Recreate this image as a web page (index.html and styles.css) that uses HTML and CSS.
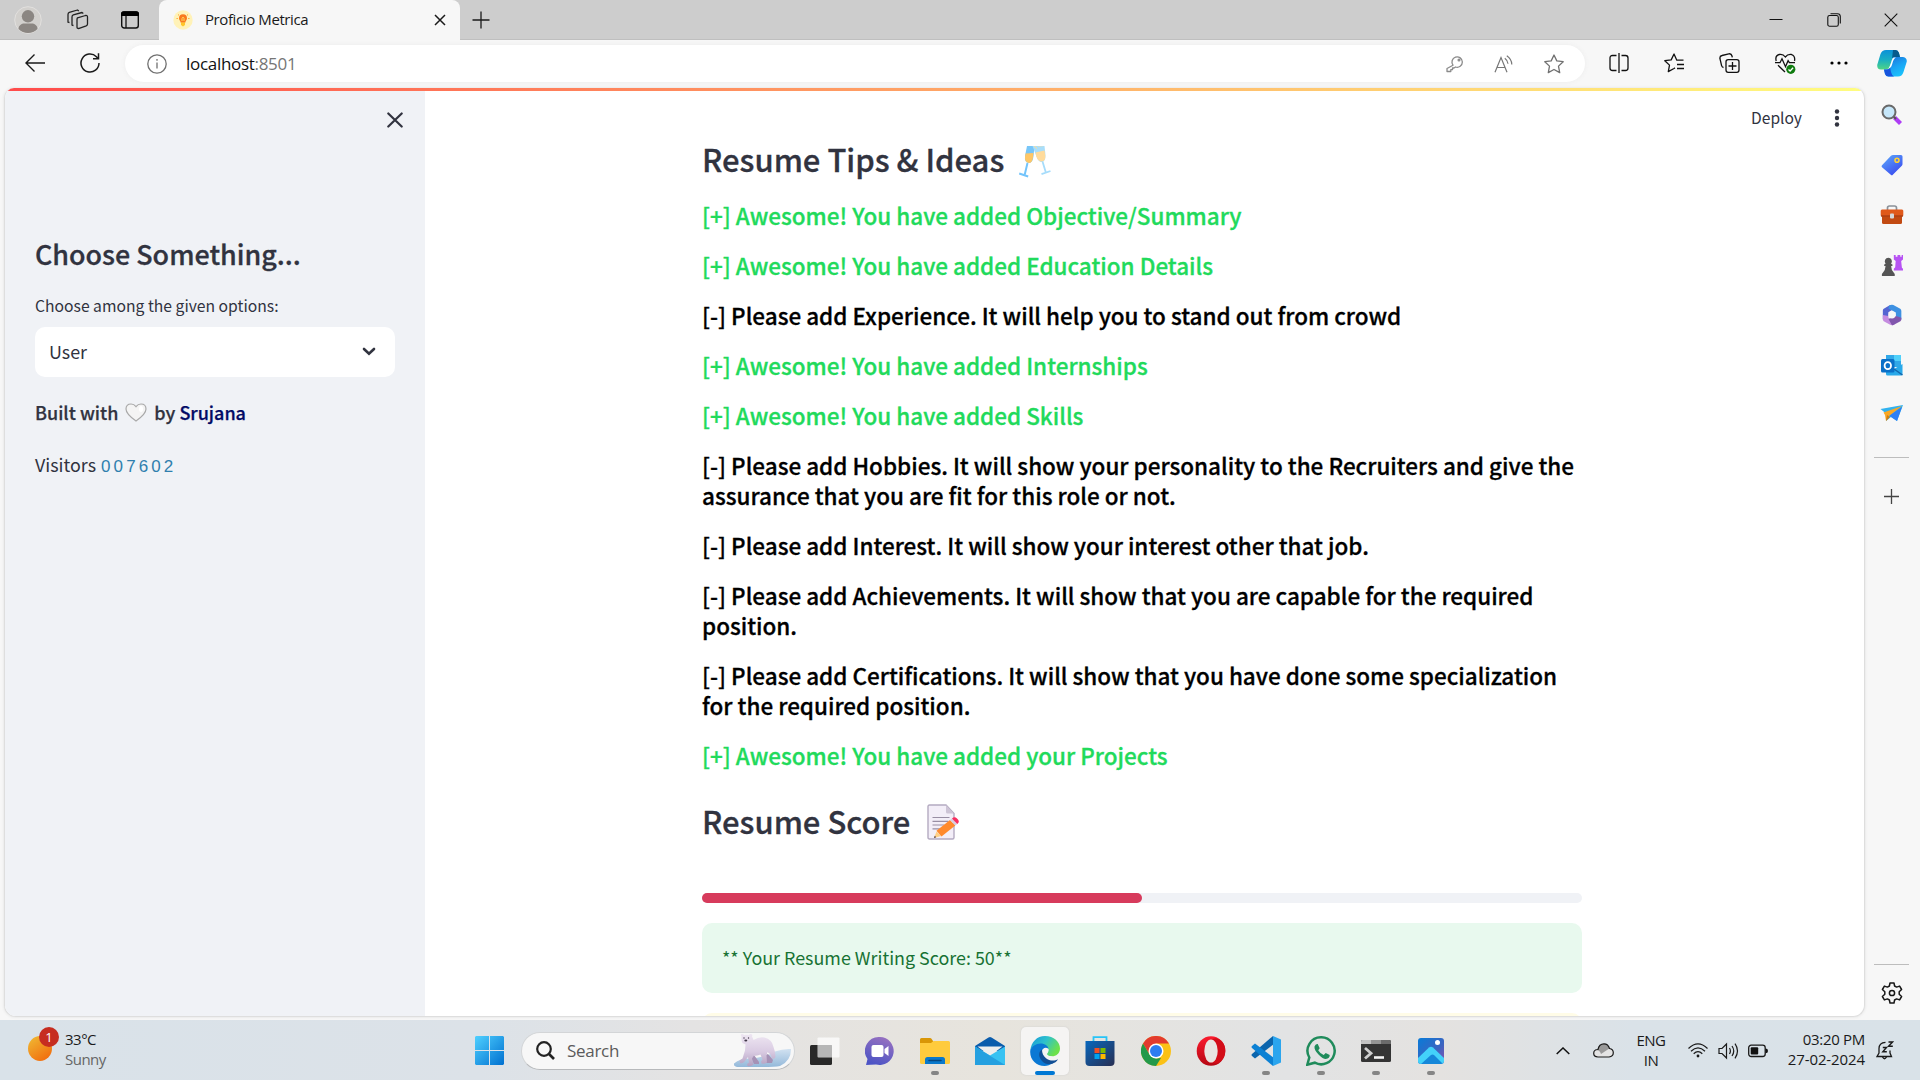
FILE: index.html
```html
<!DOCTYPE html>
<html lang="en">
<head>
<meta charset="utf-8">
<title>Proficio Metrica</title>
<link rel="stylesheet" href="styles.css">
</head>
<body>
<div class="desktop">
  <header class="tabstrip">
    <div class="tab-actions">
      <svg class="avatar" width="28" height="28" viewBox="0 0 28 28"><circle cx="14" cy="14" r="13.3" fill="#d2d0cd" stroke="#e2e0de"/><circle cx="14" cy="10.3" r="6.2" fill="#8b8682"/><path d="M4.5 23c0-3.500 3-5.400 6-5.400h7c3 0 6 1.900 6 5.400a13.300 13.300 0 0 1-19 0z" fill="#8b8682"/></svg>
      <svg class="workspaces" width="22" height="22" viewBox="0 0 22 22" fill="none" stroke="#222" stroke-width="1.300" stroke-linejoin="round"><path d="M10.500 8.800l8-2.300q2-.4 2 1.500v7q0 1.400-1.300 1.900l-7 2.500q-2.200.5-2.200-1.500v-7q0-1.600.5-2.100zM6.500 16.500l-1.500-.4V8q0-1.600 1.300-2.100l8.700-2.400 1.300 1M2.500 13.500l-1.500-.3V5.500q0-1.600 1.300-2.100L10.500 1l1.300 1"/></svg>
      <svg width="20" height="20" viewBox="0 0 20 20"><rect x="1.700" y="2" width="16.600" height="16" rx="2.500" fill="none" stroke="#111" stroke-width="1.400"/><path d="M1 6V4q0-2.700 2.700-2.700h12.600Q19 1.300 19 4v2z" fill="#000"/><path d="M6 6v12" stroke="#111" stroke-width="1.300"/></svg>
    </div>
    <div class="tab">
      <svg width="20" height="20" viewBox="0 0 20 20"><circle cx="10" cy="10" r="9.700" fill="#fff2b8"/><path d="M10 4.300a4 4 0 0 1 4 4c0 2-1.500 2.500-1.800 4.500H7.800C7.500 10.800 6 10.300 6 8.300a4 4 0 0 1 4-4z" fill="#f9791e"/><path d="M8 12.500h4V15l-2 1.500L8 15z" fill="#ffc629"/><path d="M9 11V8.500L10 7l1 1.500V11" stroke="#ffd75a" fill="none"/><path d="M3.500 8.500h1.300M15.200 8.500h1.300M5 4.500l1 .9M15 4.500l-1 .9" stroke="#ffa42c"/></svg>
      <span class="tab-title">Proficio Metrica</span>
      <svg class="tab-close" width="12" height="12" viewBox="0 0 12 12"><path d="M1 1l10 10M11 1L1 11" stroke="#1a1a1a" stroke-width="1.500"/></svg>
    </div>
    <svg class="newtab" width="18" height="18" viewBox="0 0 18 18"><path d="M9 .5v17M.5 9h17" stroke="#1a1a1a" stroke-width="1.300"/></svg>
    <div class="window-controls">
      <svg width="14" height="14" viewBox="0 0 14 14"><path d="M.5 6.500h13" stroke="#111"/></svg>
      <svg width="14" height="14" viewBox="0 0 14 14" fill="none" stroke="#111" stroke-width="1.100"><rect x=".8" y="2.500" width="10.500" height="10.700" rx="1.800"/><path d="M3.500.7h7q2.800 0 2.800 2.800v7"/></svg>
      <svg width="14" height="14" viewBox="0 0 14 14"><path d="M.7.700l12.600 12.600M13.300.700L.7 13.300" stroke="#111" stroke-width="1.100"/></svg>
    </div>
  </header>

  <nav class="toolbar">
    <svg class="back" width="20" height="18" viewBox="0 0 20 18" fill="none" stroke="#1a1a1a" stroke-width="1.400"><path d="M20 9H1M9.500.6L1 9l8.500 8.400"/></svg>
    <svg class="reload" width="20" height="20" viewBox="0 0 20 20" fill="none" stroke="#1a1a1a" stroke-width="1.500"><path d="M19 10a9 9 0 1 1-2.600-6.300L18 5.500M18.500.3v5.500H13"/></svg>
    <div class="address">
      <svg width="20" height="20" viewBox="0 0 20 20" fill="none" stroke="#707070" stroke-width="1.300"><circle cx="10" cy="10" r="9.200"/><path d="M10 8.500v6M10 5v1.700"/></svg>
      <span class="url">localhost<i>:8501</i></span>
      <div class="address-icons">
        <svg width="18" height="18" viewBox="0 0 18 18" fill="none" stroke="#8a8a8a" stroke-width="1.300" stroke-linejoin="round"><path d="M7 10.200A5.200 5.200 0 1 1 9.500 12L8 13H6.500v1.700H4.800v1.800H1V13.500z"/><circle cx="13" cy="5" r=".9"/></svg>
        <svg width="20" height="18" viewBox="0 0 20 18" fill="none" stroke="#777" stroke-width="1.200"><path d="M1 17.300L7 2.500l6 14.800M3.200 12.500h7.700M10.800 3.200q3 2.200 3.200 5.600M12.800.7q5 3.500 5 8.800"/></svg>
        <svg width="20" height="20" viewBox="0 0 20 20" fill="none" stroke="#707070" stroke-width="1.300" stroke-linejoin="round"><path d="M10 1l2.800 5.900 6.400.8-4.700 4.400 1.200 6.500L10 15.500l-5.700 3.100 1.200-6.500L.8 7.700l6.400-.8z"/></svg>
      </div>
    </div>
    <div class="browser-icons">
      <svg width="20" height="20" viewBox="0 0 20 20" fill="none" stroke="#111" stroke-width="1.300"><path d="M7.500 2.500h-4Q1 2.500 1 5v10q0 2.500 2.500 2.500h4M12.500 2.500h4Q19 2.500 19 5v10q0 2.500-2.500 2.500h-4M10 0v20"/></svg>
      <svg width="21" height="20" viewBox="0 0 21 20" fill="none" stroke="#111" stroke-width="1.300" stroke-linejoin="round"><path d="M19.500 7.200h-6.700L10 1 7.200 6.900.8 7.700l4.700 4.400-1.200 6.500 5.700-3.100 1-.6M13 11.500h7M13 15.500h7"/></svg>
      <svg width="21" height="20" viewBox="0 0 21 20" fill="none" stroke="#111" stroke-width="1.300"><rect x="7" y="6.600" width="13" height="12.700" rx="2.200"/><path d="M13.500 9v8M9.500 13h8M4.500 14.500Q3 14.300 2.600 12.700L.9 5.500Q.6 3 3 2.500L9.800.8q2.600-.4 3.200 2.200l.3 1.300"/></svg>
      <svg width="21" height="21" viewBox="0 0 21 21" fill="none" stroke="#111" stroke-width="1.300"><path d="M1.200 8Q-.2 2.700 4.200 1.500 8 .7 10.300 4 13 .7 16.500 1.500q4 1.500 3 6.500M0 9.700h5l2-4 3.500 8 2.600-6 1.300 2H20M3 12.300l7 6.700"/><circle cx="15.800" cy="16.300" r="4.600" fill="#107c10" stroke="none"/><path d="M13.500 16.500l1.600 1.500 3-3.300" stroke="#fff"/></svg>
      <svg width="18" height="4" viewBox="0 0 18 4"><circle cx="2" cy="2" r="1.600"/><circle cx="9" cy="2" r="1.600"/><circle cx="16" cy="2" r="1.600"/></svg>
      <svg class="copilot" width="30" height="27" viewBox="0 0 30 27"><defs><linearGradient id="ca" x1="0" y1="0" x2="0" y2="1"><stop offset="0" stop-color="#0b91d8"/><stop offset=".5" stop-color="#19aec3"/><stop offset="1" stop-color="#4fd584"/></linearGradient><linearGradient id="cb" x1="0" y1="0" x2=".6" y2="1"><stop offset="0" stop-color="#1c67d3"/><stop offset=".6" stop-color="#1aa4f4"/><stop offset="1" stop-color="#1ac1fb"/></linearGradient></defs><path d="M13 0h5.500q2.500 0 3.400 2.700L23 7h-5q-2.300 0-3 2.700L13 17q-.8 2.600-3.300 2.600H4Q0 19.600.2 15L3.500 4Q5 0 9 0z" fill="url(#ca)"/><path d="M16 0h2.500q2.500 0 3.400 2.700L23 7h-5.500q-2 .2-2.500 1.800z" fill="#075a8c"/><path d="M17 26.500h-5.500Q9 26.500 8 24l-1-4.400h3q2.300 0 3-2.600L15 9.700Q16 7 18 7h8q4 .5 3.800 4.500L26.500 22q-1.400 4.500-5.500 4.500z" fill="url(#cb)"/><path d="M7 19.600h3q2-.1 3-2.600l1 5q.8 3.500 3 4.500h-5.500Q9 26.500 8 24z" fill="#1854dd"/><path d="M15.500 8.500Q17 7.200 19 7.500q-2.500 1-3.500 5.500T12 18.500h-1.800q2 0 2.800-3z" fill="#fff"/></svg>
    </div>
  </nav>

  <main class="browser-body">
    <div class="page">
      <div class="rainbow"></div>
      <aside class="side">
        <svg class="side-close" width="16" height="16" viewBox="0 0 16 16"><path d="M1.300 1.500l13.400 13M14.700 1.500l-13.400 13" stroke="#31333f" stroke-width="2.200" stroke-linecap="round"/></svg>
        <h2 class="side-title">Choose Something...</h2>
        <div class="label">Choose among the given options:</div>
        <div class="select"><span>User</span><svg width="14" height="10" viewBox="0 0 14 10"><path d="M2 2l5 4.800L12 2" fill="none" stroke="#31333f" stroke-width="2.600" stroke-linecap="round"/></svg></div>
        <div class="built"><span>Built with</span><svg width="22" height="19" viewBox="0 0 22 19"><path d="M11 18Q1 11 1 6 1 1 6 1q3 0 5 2.700Q13 1 16 1q5 0 5 5 0 5-10 12z" fill="#f4f4f4" stroke="#a9a9a9" stroke-width="1.200"/><ellipse cx="16" cy="6" rx="2" ry="3" fill="#fff"/></svg><span>by <a class="author">Srujana</a></span></div>
        <div class="visitors"><span>Visitors</span><span class="digits">007602</span></div>
      </aside>
      <section class="content">
        <div class="deploy"><span>Deploy</span><svg width="6" height="18" viewBox="0 0 6 18" fill="#31333f"><circle cx="3" cy="2.500" r="2.200"/><circle cx="3" cy="9" r="2.200"/><circle cx="3" cy="15.500" r="2.200"/></svg></div>
        <div class="column">
          <h3 class="heading"><span>Resume Tips &amp; Ideas</span>
            <svg class="cheers" width="34" height="32" viewBox="0 0 34 32"><path d="M9 0h7.500l-1 10q-.6 7-4.500 7-4.800-.3-4-7z" fill="#78c6f8"/><path d="M7.500 7.500l8-.5-.6 5Q14 17 11 17q-4.700-.8-4-6z" fill="#ffc766"/><path d="M14.500 0h12l.8 7q1 7.500-3 9-4 .5-6-6z" fill="#a9defa"/><path d="M17.500 6.500l9-2 .8 5q.5 5-3 6-4 .5-6-5z" fill="#ffdb9b"/><path d="M16 0l3 2.500M20 0l5-.3" stroke="#ffdc93"/><path d="M9.500 17L6.500 29.500M1.200 27.500l9 3" stroke="#73c4fb" stroke-width="2"/><path d="M24.500 15.500l3.500 11.500M23.500 28.200l9-3.200" stroke="#a6dcfb" stroke-width="1.800"/></svg>
          </h3>
          <div class="tips">
            <h5 class="good">[+] Awesome! You have added Objective/Summary</h5>
            <h5 class="good">[+] Awesome! You have added Education Details</h5>
            <h5>[-] Please add Experience. It will help you to stand out from crowd</h5>
            <h5 class="good">[+] Awesome! You have added Internships</h5>
            <h5 class="good">[+] Awesome! You have added Skills</h5>
            <h5>[-] Please add Hobbies. It will show your personality to the Recruiters and give the<br>assurance that you are fit for this role or not.</h5>
            <h5>[-] Please add Interest. It will show your interest other that job.</h5>
            <h5>[-] Please add Achievements. It will show that you are capable for the required<br>position.</h5>
            <h5>[-] Please add Certifications. It will show that you have done some specialization<br>for the required position.</h5>
            <h5 class="good">[+] Awesome! You have added your Projects</h5>
          </div>
          <h3 class="heading score"><span>Resume Score</span>
            <svg class="memo" width="33" height="36" viewBox="0 0 33 36"><path d="M2.500 1h16.500l8 8.500v24q0 1.500-1.500 1.500h-23Q1 35 1 33.500v-31Q1 1 2.500 1z" fill="#f3eef8" stroke="#b4abc1" stroke-width="1.400"/><path d="M19 1l8 8.500h-6.500q-1.500 0-1.500-1.500z" fill="#cdc4d6"/><path d="M5.500 13.500h17M5.500 17.300h16M5.500 21h12M5.500 24.800h8" stroke="#998ea4" stroke-width="1.200"/><path d="M9.500 27.500l4.500 4.500-7 2z" fill="#ffcf86"/><path d="M7.800 31.800L7 34l2.200-.7z" fill="#403040"/><path d="M9.500 26.800L23 16l5.300 5.500L14.500 32.500z" fill="#ff8a2d"/><path d="M23 16l2-1.600 5.300 5.500-2 1.600z" fill="#d8cde0"/><path d="M25 14.400q2.500-2.500 5 0 3.500 3 .3 5.500z" fill="#f92f60"/></svg>
          </h3>
          <div class="progress"><div class="progress-fill" style="width:50%"></div></div>
          <div class="alert">** Your Resume Writing Score: 50**</div>
          <div class="alert note"></div>
        </div>
      </section>
    </div>
    <aside class="edgebar">
      <svg width="22" height="22" viewBox="0 0 22 22"><path d="M13.500 13.500l6 6" stroke="#ae3df5" stroke-width="4.200"/><path d="M12 12l3 3" stroke="#555" stroke-width="2"/><circle cx="8" cy="8" r="6.500" fill="#c6e7fa" stroke="#696969" stroke-width="2"/></svg>
      <svg width="22" height="22" viewBox="0 0 22 22"><defs><linearGradient id="tg" x1="0" y1="0" x2=".7" y2="1"><stop stop-color="#5eacfa"/><stop offset="1" stop-color="#3a4bf0"/></linearGradient></defs><path d="M12 1h8q1.500 0 1.500 1.500V10q0 1-.7 1.800l-9 9q-1 1-2 0L1 13.200q-1-1 0-2l9-9.400Q11 1 12 1z" fill="url(#tg)"/><circle cx="16" cy="6.300" r="2" fill="#5b7bea" stroke="#ffd234" stroke-width="1.600"/></svg>
      <svg width="24" height="22" viewBox="0 0 24 22"><path d="M7.500 6V4q0-2 2-2h5q2 0 2 2v2" fill="none" stroke="#8b9199" stroke-width="1.700"/><rect x="2" y="9" width="20" height="11" rx="1.500" fill="#c24a12"/><path d="M2 5.500h20q1.300 0 1.300 1.500v4q0 1.500-1.300 1.500H2Q.7 12.500.7 11V7Q.7 5.500 2 5.500z" fill="#e0591a"/><path d="M1 12h22" stroke="#963410"/><rect x="10" y="9.500" width="4" height="5" rx="1" fill="#d4d7da"/></svg>
      <svg class="tall" width="24" height="24" viewBox="0 0 24 24"><path d="M14 1h2v2h2V1h3v2h1.500V1H24v5l-2 1.500.8 7.500 1.200 1.200V18H14v-2l1.500-1.500L16 7.500 14 6z" fill="#b753f3"/><path d="M8 4a4 4 0 0 1 3 6.500l1.500 1v1.500H11q.3 5 3 7.500 1.500 1 1 3.500H1q-.5-2.500 1-3.500 2.700-2.500 3-7.500H3.500v-1.500l1.500-1A4 4 0 0 1 8 4z" fill="#555"/></svg>
      <svg class="tall" width="22" height="24" viewBox="0 0 22 24"><path d="M8 1.600L2 5.200Q1 6 1 7.200v9.500l6-3.500V9l7-4.500L9.500 1.600q-.8-.4-1.500 0z" fill="#5465d2"/><path d="M8 1.600q1-.7 3-.7 1.500 0 3 .9l6 3.500q1.200.8 1.200 2.300v9.200l-6-3.500V9.200L7 5z" fill="#3e91e2"/><path d="M1 12v4.700q0 1.300 1 2l7 3.900q2 1 4 0l2-1-7.500-5.300L7 13z" fill="#c58ce0"/><path d="M21.200 15v2q0 1-1 1.700L13 22.500q-1 .6-2 .6l-4-7 4-1 4.500-2z" fill="#8156ad"/><circle cx="11" cy="12" r="3.800" fill="#f7f7f7"/></svg>
      <svg width="22" height="22" viewBox="0 0 22 22"><path d="M5 1h15v12H5z" fill="#31a8e8"/><path d="M13 1h7v6h-7z" fill="#50d0fa"/><path d="M5 7h8v7H5z" fill="#1470b8"/><path d="M5 12l8 3 8.500-5v10q0 1.500-1.500 1.500H6.500Q5 21.500 5 20z" fill="#29a9ea"/><path d="M13 15l8.500 6" stroke="#1467ac" stroke-width="1.500"/><rect x="0" y="5" width="13.500" height="13.500" rx="1.500" fill="#0a70c8"/><ellipse cx="6.800" cy="11.700" rx="3.200" ry="3.500" fill="none" stroke="#fff" stroke-width="1.800"/></svg>
      <svg width="23" height="20" viewBox="0 0 23 20"><path d="M.5 5L23 1l-6 16-6-4-5 4V9.500z" fill="#31b2ef"/><path d="M9 11.500L22 3l-5 14z" fill="#2d7ff4"/><path d="M3.500 8.500L22 2 9 12l-3 5-1-6z" fill="#f9a825"/><path d="M6 17l1-6 3 2z" fill="#d57e0b"/></svg>
      <hr>
      <svg class="plus" width="15" height="15" viewBox="0 0 15 15"><path d="M7.500 0v15M0 7.500h15" stroke="#444" stroke-width="1.300"/></svg>
      <hr class="bottom-rule">
      <svg width="22" height="22" viewBox="0 0 22 22" fill="none" stroke="#161616" stroke-width="1.500" stroke-linejoin="round"><path d="M9 1h4l.6 3 2 1.100 3-1 2 3.400-2.400 2.200v2.600l2.400 2.200-2 3.400-3-1-2 1.100-.6 3H9l-.6-3-2-1.100-3 1-2-3.400 2.400-2.200V9.700L1.400 7.500l2-3.400 3 1 2-1.100z"/><circle cx="11" cy="11" r="2.600"/></svg>
    </aside>
  </main>

  <footer class="taskbar">
    <div class="weather">
      <div class="sun"><span class="badge">1</span></div>
      <div class="weather-text"><span>33°C</span><span class="dim">Sunny</span></div>
    </div>
    <div class="apps">
      <svg class="start" width="29" height="29" viewBox="0 0 29 29"><defs><linearGradient id="wg" x1="0" y1="0" x2="1" y2="1"><stop stop-color="#4fd0ff"/><stop offset="1" stop-color="#0070d0"/></linearGradient></defs><path d="M1 0h13v14H0V1zM15 0h13l1 1v13H15zM0 15h14v14H1l-1-1zM15 15h14v13l-1 1H15z" fill="url(#wg)"/></svg>
      <div class="search">
        <svg width="19" height="19" viewBox="0 0 19 19" fill="none" stroke="#222" stroke-width="2.200"><circle cx="8" cy="8" r="6.800"/><path d="M13 13l5 5" stroke-width="2.600"/></svg>
        <span>Search</span>
        <svg class="bear" width="58" height="34" viewBox="0 0 58 34"><defs><linearGradient id="ice" x1="0" y1="0" x2="0" y2="1"><stop stop-color="#d2e2f1"/><stop offset="1" stop-color="#94b9da"/></linearGradient><linearGradient id="fur" x1="0" y1="0" x2="0" y2="1"><stop stop-color="#eee6f2"/><stop offset=".55" stop-color="#d9cbe2"/><stop offset="1" stop-color="#b3a0c1"/></linearGradient></defs><path d="M0 29.500q6-5 15-5 17-1 26-7 8-3 16-2.500 0 12-11 17-5 1-20 1H3q-4-1-3-3.500z" fill="url(#ice)"/><path d="M34 20l5 6-1 3h-6l-3-7zM20 21l5 7v2h-5l-4-8z" fill="#a692b6"/><path d="M7 2q-.7-2 1-2t2 1q2.500-.7 5 0 .5-1.200 2-1 2 .3 1 2.500 1.200 2 1.500 3.500 5.500-3.500 11-2.500Q38 5 39.500 13q2 5 2 10-1 2.500-3.500 1.500l-1.500-4-3-2.500-1 3.500.5 7q-2.500 2-5.500 1l-.5-2 1.500-2-2-5q-3 1.500-6.500 1l-2 3 1.500 6q-2.500 2.500-6 1.500l-.5-2 2-1.500-1-5.500-3.500 4.500q-1.500 2.500-4.500 1.500l-.5-2.500 3-2 2.500-8 .5-6-3-1.500q-1.500-3-1-7z" fill="url(#fur)"/><circle cx="10" cy="4" r=".7" fill="#413748"/><circle cx="14.500" cy="4" r=".7" fill="#413748"/><ellipse cx="11.800" cy="6.500" rx="1.500" ry="1" fill="#413748"/></svg>
      </div>
      <div class="app"><svg width="30" height="30" viewBox="0 0 30 30"><rect x="0" y="9" width="22" height="20" rx="1.500" fill="#282828"/><rect x="7.500" y="1.500" width="22" height="20" rx="1" fill="#fff" fill-opacity=".72"/><path d="M8 9h14v12H8z" fill="#b3b3b3" fill-opacity=".8"/></svg></div>
      <div class="app"><svg width="30" height="30" viewBox="0 0 30 30"><defs><linearGradient id="ch" x1=".8" y1="0" x2=".4" y2="1"><stop stop-color="#9a72c0"/><stop offset="1" stop-color="#4d54c5"/></linearGradient></defs><path d="M15 1a14 14 0 1 1-4 27.500L1 29l1.500-6A14 14 0 0 1 15 1z" fill="url(#ch)"/><rect x="6.500" y="9" width="12" height="12" rx="2" fill="#fff"/><path d="M19.500 13l4-3v10l-4-3z" fill="#fff"/></svg></div>
      <div class="app open"><svg width="30" height="30" viewBox="0 0 30 30"><path d="M0 3.500Q0 2 1.500 2H10q1 0 1.500.800L13 5v6H0z" fill="#d99606"/><path d="M0 7h11l2.500-2H28.500Q30 5 30 6.500v20q0 1.500-1.500 1.500h-27Q0 28 0 26.500z" fill="#ffcb3d"/><path d="M5 28v-4.500q0-2.500 2.500-2.500h15q2.500 0 2.500 2.500V28z" fill="#0a79cb"/><path d="M9 24.500h12" stroke="#06477f" stroke-width="1.500" stroke-linecap="round"/></svg></div>
      <div class="app"><svg width="30" height="30" viewBox="0 0 30 30"><path d="M0 10L13.500 1.500q1.500-1 3 0L30 10v5H0z" fill="#0a5cac"/><path d="M2.500 10.500h25L15 20z" fill="#eee"/><path d="M0 10.500l15 9 15-9V29H0z" fill="#38c2f2"/><path d="M0 10.500L30 29H0z" fill="#25a0e0"/></svg></div>
      <div class="app active"><svg width="30" height="30" viewBox="0 0 30 30"><defs><linearGradient id="eg" x1="0" y1="0" x2="1" y2=".5"><stop stop-color="#1695da"/><stop offset=".5" stop-color="#2dc1cd"/><stop offset="1" stop-color="#6de14a"/></linearGradient></defs><path d="M.3 15C1 6 7 0 15 0c9 0 15 6 15 12.500 0 5-4 7.800-8 7.800-3.500 0-5-1.300-5-2.300 0-.8 1.500-1.500 1.500-3.800 0-3-3-5-6.500-5C6 9.200 1.500 11 .3 15z" fill="url(#eg)"/><path d="M.3 14.500C1.500 10.500 6 7.500 10.500 7.500c4.500 0 8 2.500 8 5.500q-3-2.500-5.500 0c-2 2-2 5 0 8s6 6 10 6c-3 2-5.500 3-8.500 3C6 30-.7 23 .3 14.500z" fill="#0b78d4"/><path d="M12 13.500c-3.500 2-4 7 0 11.500 4 4.500 10 3.300 13 1.500 1.500-1 2.500-2.200 3-3.200-3 1.700-8.500 2-12-1-3-2.500-4-5.500-4-8.800z" fill="#124f95"/><path d="M18.500 12.800q0 3-1.300 4.200-1 1 .2 2.200 2 1.800 6 1-5 2.500-8.500-.2-2.500-2.500-1.300-5 1.200-2.800 4.900-2.200z" fill="#f5f4f3"/></svg></div>
      <div class="app"><svg width="30" height="30" viewBox="0 0 30 30"><defs><linearGradient id="sg" x1="0" y1="0" x2="1" y2="1"><stop stop-color="#0867bd"/><stop offset="1" stop-color="#292f52"/></linearGradient></defs><path d="M8.500 6V1.200h13V6" fill="none" stroke="#27c4f7" stroke-width="1.800"/><path d="M.5 5h29v21q0 4-4 4h-21q-4 0-4-4z" fill="url(#sg)"/><path d="M9.500 12h5v5h-5z" fill="#f25022"/><path d="M15.500 12h5v5h-5z" fill="#7fba00"/><path d="M9.500 18h5v5h-5z" fill="#00a4ef"/><path d="M15.500 18h5v5h-5z" fill="#ffb900"/></svg></div>
      <div class="app"><svg width="30" height="30" viewBox="0 0 30 30"><circle cx="15" cy="15" r="15" fill="#fbc116"/><path d="M2 7.500A15 15 0 0 1 28 7.500H15l-6.500 11z" fill="#e33b2e"/><path d="M2 7.500l6.500 11 6.500 4 5-.5-5 8A15 15 0 0 1 2 7.500z" fill="#23994a"/><circle cx="15" cy="15" r="7.500" fill="#fff"/><circle cx="15" cy="15" r="6" fill="#2d7df0"/></svg></div>
      <div class="app"><svg width="30" height="30" viewBox="0 0 30 30"><defs><linearGradient id="og" x1="0" y1="0" x2="0" y2="1"><stop stop-color="#fb1b2e"/><stop offset="1" stop-color="#b60713"/></linearGradient></defs><ellipse cx="15" cy="15" rx="14.300" ry="14.700" fill="url(#og)"/><path d="M15 4q6-4 11 1.500 3.500 4 3.300 9.500-.3 5.500-3.500 9.300-5 5.500-10.800 1.700z" fill="#d30d18"/><ellipse cx="15" cy="15" rx="6.700" ry="11.600" fill="#e8e5e1"/></svg></div>
      <div class="app open"><svg width="30" height="30" viewBox="0 0 30 30"><path d="M22 0l1 8L4 22.500l-3-2.400q-1-1 0-2.200z" fill="#0b65ad"/><path d="M22 30l1-8L4 7.500 1 9.900q-1 1 0 2.200z" fill="#0c81d4"/><path d="M22 0l8 3.500v23L22 30z" fill="#2ba5ee"/></svg></div>
      <div class="app open"><svg width="30" height="30" viewBox="0 0 30 30"><path d="M15.500 1.300a13.500 13.500 0 1 1-6.700 25.400L1.300 28.700l2-7.200A13.500 13.500 0 0 1 15.500 1.300z" fill="none" stroke="#1f8b5b" stroke-width="2.500"/><path d="M8.500 10.500q1-3 3.200-2.500l2 4.300-1.500 2q2 3.500 5.500 4.700l2-2 4 2q.2 3.500-4 4Q17 23 12.500 18.500T8.500 10.500z" fill="#1f8b5b"/></svg></div>
      <div class="app open"><svg width="30" height="30" viewBox="0 0 30 30"><rect x="0" y="4" width="30" height="22" rx="1.500" fill="#343434"/><path d="M1.500 4H10v4H0V5.500Q0 4 1.500 4z" fill="#c3c3c3"/><path d="M10 4h10v4H10z" fill="#949494"/><path d="M20 4h8.500Q30 4 30 5.500V8H20z" fill="#6b6b6b"/><path d="M4 12l6 5.200L4 22.500" fill="none" stroke="#cfcfcf" stroke-width="2.800"/><path d="M13 21.500h10" stroke="#f4f4f4" stroke-width="2.600"/></svg></div>
      <div class="app open"><svg width="30" height="30" viewBox="0 0 30 30"><defs><linearGradient id="pg" x1="0" y1="0" x2="1" y2="1"><stop stop-color="#087bd8"/><stop offset=".6" stop-color="#3d64c0"/><stop offset="1" stop-color="#8f50b0"/></linearGradient></defs><rect x="2" y="2" width="26" height="26" rx="3" fill="url(#pg)"/><path d="M2 22l11-10.500q2-1.500 4 0L28 22v3q0 3-3 3H5q-3 0-3-3z" fill="#43d2fa"/><path d="M5 28l10-9q1.500-1 3 0l8.500 8.500-1.500.5z" fill="#1687d9"/><circle cx="21.500" cy="6.500" r="2.500" fill="#fff"/></svg></div>
    </div>
    <div class="tray">
      <svg width="14" height="8" viewBox="0 0 14 8"><path d="M.7 7L7 1l6.300 6" fill="none" stroke="#111" stroke-width="1.500"/></svg>
      <svg class="cloud" width="21" height="15" viewBox="0 0 21 15"><path d="M5 14Q.7 14 .7 10.300T5 6.500Q6 .8 11 .8q4.200 0 5.500 4.700 3.800.5 3.800 4.300T16 14z" fill="#e4e4e4"/><path d="M4 7q2-6 7-6.200 4.200 0 5.300 4.700L8 11q-1-3.500-4-4z" fill="#999"/><path d="M5 14Q.7 14 .7 10.300T5 6.500Q6 .8 11 .8q4.200 0 5.500 4.700 3.800.5 3.800 4.300T16 14z" fill="none" stroke="#1a1a1a" stroke-width="1.200"/></svg>
      <div class="lang"><span>ENG</span><span>IN</span></div>
      <svg class="wifi" width="20" height="15" viewBox="0 0 20 15" fill="none" stroke="#1a1a1a" stroke-width="1.200"><path d="M.5 5.500Q10-3.800 19.500 5.500M3 8.200q7-6.800 14 0M5.700 10.700q4.300-4 8.600 0"/><circle cx="10" cy="13" r="1.400" fill="#1a1a1a" stroke="none"/></svg>
      <svg class="volume" width="21" height="18" viewBox="0 0 21 18" fill="none" stroke="#1a1a1a" stroke-width="1.200"><path d="M1 6.500h3L8.500 2v14L4 11.500H1z"/><path d="M11.500 6q1.800 3 0 6M14 4q3.500 5 0 10M17 1.700q5 7.300 0 14.600"/></svg>
      <svg class="battery" width="20" height="14" viewBox="0 0 20 14"><rect x=".7" y="1.200" width="16.500" height="11.300" rx="2.500" fill="none" stroke="#1a1a1a" stroke-width="1.300"/><rect x="2.700" y="3.300" width="7.500" height="7.200" rx="1" fill="#111"/><path d="M17.500 4.500q2.500 0 2.500 2.400t-2.500 2.400z" fill="#111"/></svg>
      <div class="clock"><span>03:20 PM</span><span class="date">27-02-2024</span></div>
      <svg class="bell" width="18" height="19" viewBox="0 0 18 19" fill="none" stroke="#1a1a1a" stroke-width="1.300"><path d="M9.500 1.300Q3 1.700 3 7.500V12l-2 3.500h14.500L14 12V9.500M6.500 16q2 3.500 4 0"/><path d="M6.800 6.500h3.700l-3.700 4.300h4M12.500 1h4l-4 4.300h4.300" stroke-width="1.400"/></svg>
    </div>
  </footer>
</div>
</body>
</html>
```
FILE: styles.css
```css
* { box-sizing: border-box; }
body { margin: 0; overflow: hidden; font-family: "Open Sans", sans-serif; color: #1a1a1a; }
svg { display: block; flex: none; }
h2, h3, h5 { margin: 0; font-weight: 500; -webkit-text-stroke: .3px currentColor; }
i { font-style: normal; }
.desktop { width: 1920px; height: 1080px; display: grid; grid-template-rows: 40px 48px 932px 60px; background: #f7f7f7; }

.tabstrip { display: flex; align-items: center; background: #cdcdcd; border-bottom: 1px solid #bfbfbf; }
.tab-actions { display: flex; align-items: center; width: 158px; padding-left: 14px; gap: 25px; }
.tab-actions .workspaces { margin-right: 6px; }
.tab { display: flex; align-items: center; width: 301px; height: 41px; margin: 0 0 -1px 1px; padding: 0 14px 1px 14px; background: #f7f7f7; border-radius: 8px 8px 0 0; }
.tab-title { margin-left: 12px; font-size: 15px; letter-spacing: -.4px; line-height: 38px; padding-bottom: 1px; }
.tab-close { margin-left: auto; }
.newtab { margin-left: 12px; }
.window-controls { display: flex; gap: 43.500px; margin: 0 22px 0 auto; }

.toolbar { display: flex; align-items: center; padding-bottom: 2px; }
.back { margin-left: 25px; }
.reload { margin-left: 35px; }
.address { display: flex; align-items: center; width: 1460px; height: 37px; margin: 1px 24px 0 25px; padding: 0 21px 0 22px; border-radius: 19px; background: #fff; box-shadow: 0 0 5px #ececec; }
.url { margin-left: 19px; padding-bottom: 1px; font-size: 17px; letter-spacing: -.3px; color: #111; }
.url i { color: #767676; }
.address-icons { display: flex; align-items: center; gap: 30px; margin-left: auto; }
.browser-icons { display: flex; align-items: center; gap: 34.600px; }
.browser-icons .copilot { margin-left: -6px; }

.browser-body { display: flex; align-items: flex-start; border-bottom: 1px solid #adb3b7; height: 933px; }
.page { display: grid; grid-template: 3px 925px / 420px 1440px; width: 1861px; height: 929px; margin-left: 4px; overflow: hidden; border: 1px solid #dedede; border-top: 0; border-radius: 10px 10px 12px 12px; background: #fff; box-shadow: 0 0 3px #ddd; font-family: "Noto Sans CJK SC", "Noto Sans", sans-serif; color: #31333f; }
.rainbow { grid-column: 1 / 3; background: linear-gradient(90deg, #ff4b4b, #fffd80); }
.side { background: #f0f2f6; padding: 0 30px; display: flex; flex-direction: column; }
.side-close { align-self: flex-end; margin: 21px -8px 0 0; }
.side-title { margin-top: 108px; height: 36px; line-height: 36px; font-size: 26.900px; }
.label { margin-top: 21px; font-size: 15.700px; line-height: 26px; }
.select { display: flex; align-items: center; justify-content: space-between; height: 50px; margin-top: 8px; padding: 0 19px 0 14px; border-radius: 10px; background: #fff; font-size: 17.900px; }
.select span { padding-bottom: 2px; }
.built { display: flex; align-items: center; gap: 7px; margin-top: 20px; font-size: 18px; line-height: 30px; font-weight: 500; -webkit-text-stroke: .25px currentColor; }
.author { color: #020a66; }
.visitors { display: flex; gap: 5px; margin-top: 22px; font-size: 17.900px; line-height: 30px; }
.digits { padding-top: 3px; font-family: "Liberation Sans", sans-serif; font-size: 17px; letter-spacing: 3.100px; color: #2f7fae; }

.content { padding-left: 277px; }
.deploy { display: flex; align-items: center; justify-content: flex-end; gap: 32px; height: 46px; padding: 7px 25px 0 0; font-size: 15.600px; line-height: 26px; }
.deploy span { padding-bottom: 1px; }
.column { width: 880px; }
.heading { display: flex; height: 42px; font-size: 31px; line-height: 44px; }
.cheers { margin: 9px 0 0 14px; }
.memo { margin: 5px 0 0 17px; }
.tips { display: flex; flex-direction: column; gap: 20px; margin-top: 21px; color: #000; }
.tips h5 { font-size: 22.470px; line-height: 30px; white-space: nowrap; }
.tips .good { color: #21da5b; }
.score { margin-top: 29px; }
.progress { height: 10px; margin-top: 52px; border-radius: 5px; background: #f0f2f6; }
.progress-fill { height: 100%; border-radius: 5px; background: #d73b5c; }
.alert { height: 70px; margin-top: 20px; padding: 19px 20px; border-radius: 10px; background: #e8f9ee; color: #177233; font-size: 17.900px; line-height: 30px; }
.note { background: #fffce7; }

.edgebar { width: 55px; height: 929px; display: flex; flex-direction: column; align-items: center; padding: 16px 2px 0 0; gap: 28px; }
.edgebar .tall { height: 22px; }
.edgebar hr { width: 35px; height: 1px; margin: 5px 0 0; border: 0; background: #bdbdbd; }
.edgebar .plus { margin-top: 3px; }
.edgebar .bottom-rule { margin-top: auto; margin-bottom: -11px; }
.edgebar svg:last-child { margin-bottom: 13px; }

.taskbar { display: grid; grid-template-columns: 475px 1fr 376px; padding-top: 1px; background: linear-gradient(90deg, #d9e2e9 0, #dce2e8 25%, #e4e3e3 36%, #e7e4dd 52%, #e2e3e4 67%, #e4e2e0 75%, #dae2e8 85%, #d9e2e8 100%); font-size: 15px; line-height: 20px; }
.weather { display: flex; gap: 13px; padding-left: 28px; }
.sun { position: relative; width: 24px; height: 25px; margin-top: 15px; border-radius: 50%; background: linear-gradient(145deg, #efbd35, #f26309); }
.badge { position: absolute; left: 11px; top: -9px; width: 20px; height: 20px; border-radius: 50%; background: #c62d20; color: #fff; text-align: center; font-size: 13px; }
.weather-text, .lang, .clock { display: flex; flex-direction: column; padding-top: 8px; letter-spacing: -.5px; }
.dim { color: #666; }
.apps { display: flex; align-items: center; }
.search { display: flex; align-items: center; width: 274px; height: 38px; margin: 0 6px 0 17px; padding: 0 2px 0 14px; border-radius: 19px; background: #f7f7f7; border: 1px solid #d3d5d7; border-bottom-color: #b7b9bb; font-size: 17px; letter-spacing: -.3px; color: #5b5b5b; }
.search span { margin-left: 12px; }
.bear { margin-left: auto; }
.app { position: relative; display: flex; align-items: center; justify-content: center; width: 48px; height: 48px; margin: 0 7.100px 0 0; border-radius: 5px; flex: none; }
.app.active { background: #f5f4f3; box-shadow: 0 0 2px #ccc; }
.app.open::after, .app.active::after { content: ""; position: absolute; bottom: 0; width: 8px; height: 4px; border-radius: 2px; background: #858585; }
.app.active::after { width: 20px; background: #0078d4; }
.tray { display: flex; align-items: center; padding-left: 12px; }
.cloud { margin-left: 23px; }
.lang { width: 48px; margin-left: 13px; align-items: center; align-self: flex-start; padding-top: 9px; }
.wifi { margin-left: 13px; }
.volume { margin-left: 10px; }
.battery { margin-left: 9px; }
.clock { width: 90px; margin-left: 7px; align-items: flex-end; align-self: flex-start; letter-spacing: -.3px; }
.date { letter-spacing: -.1px; }
.bell { margin-left: 11px; }
```
